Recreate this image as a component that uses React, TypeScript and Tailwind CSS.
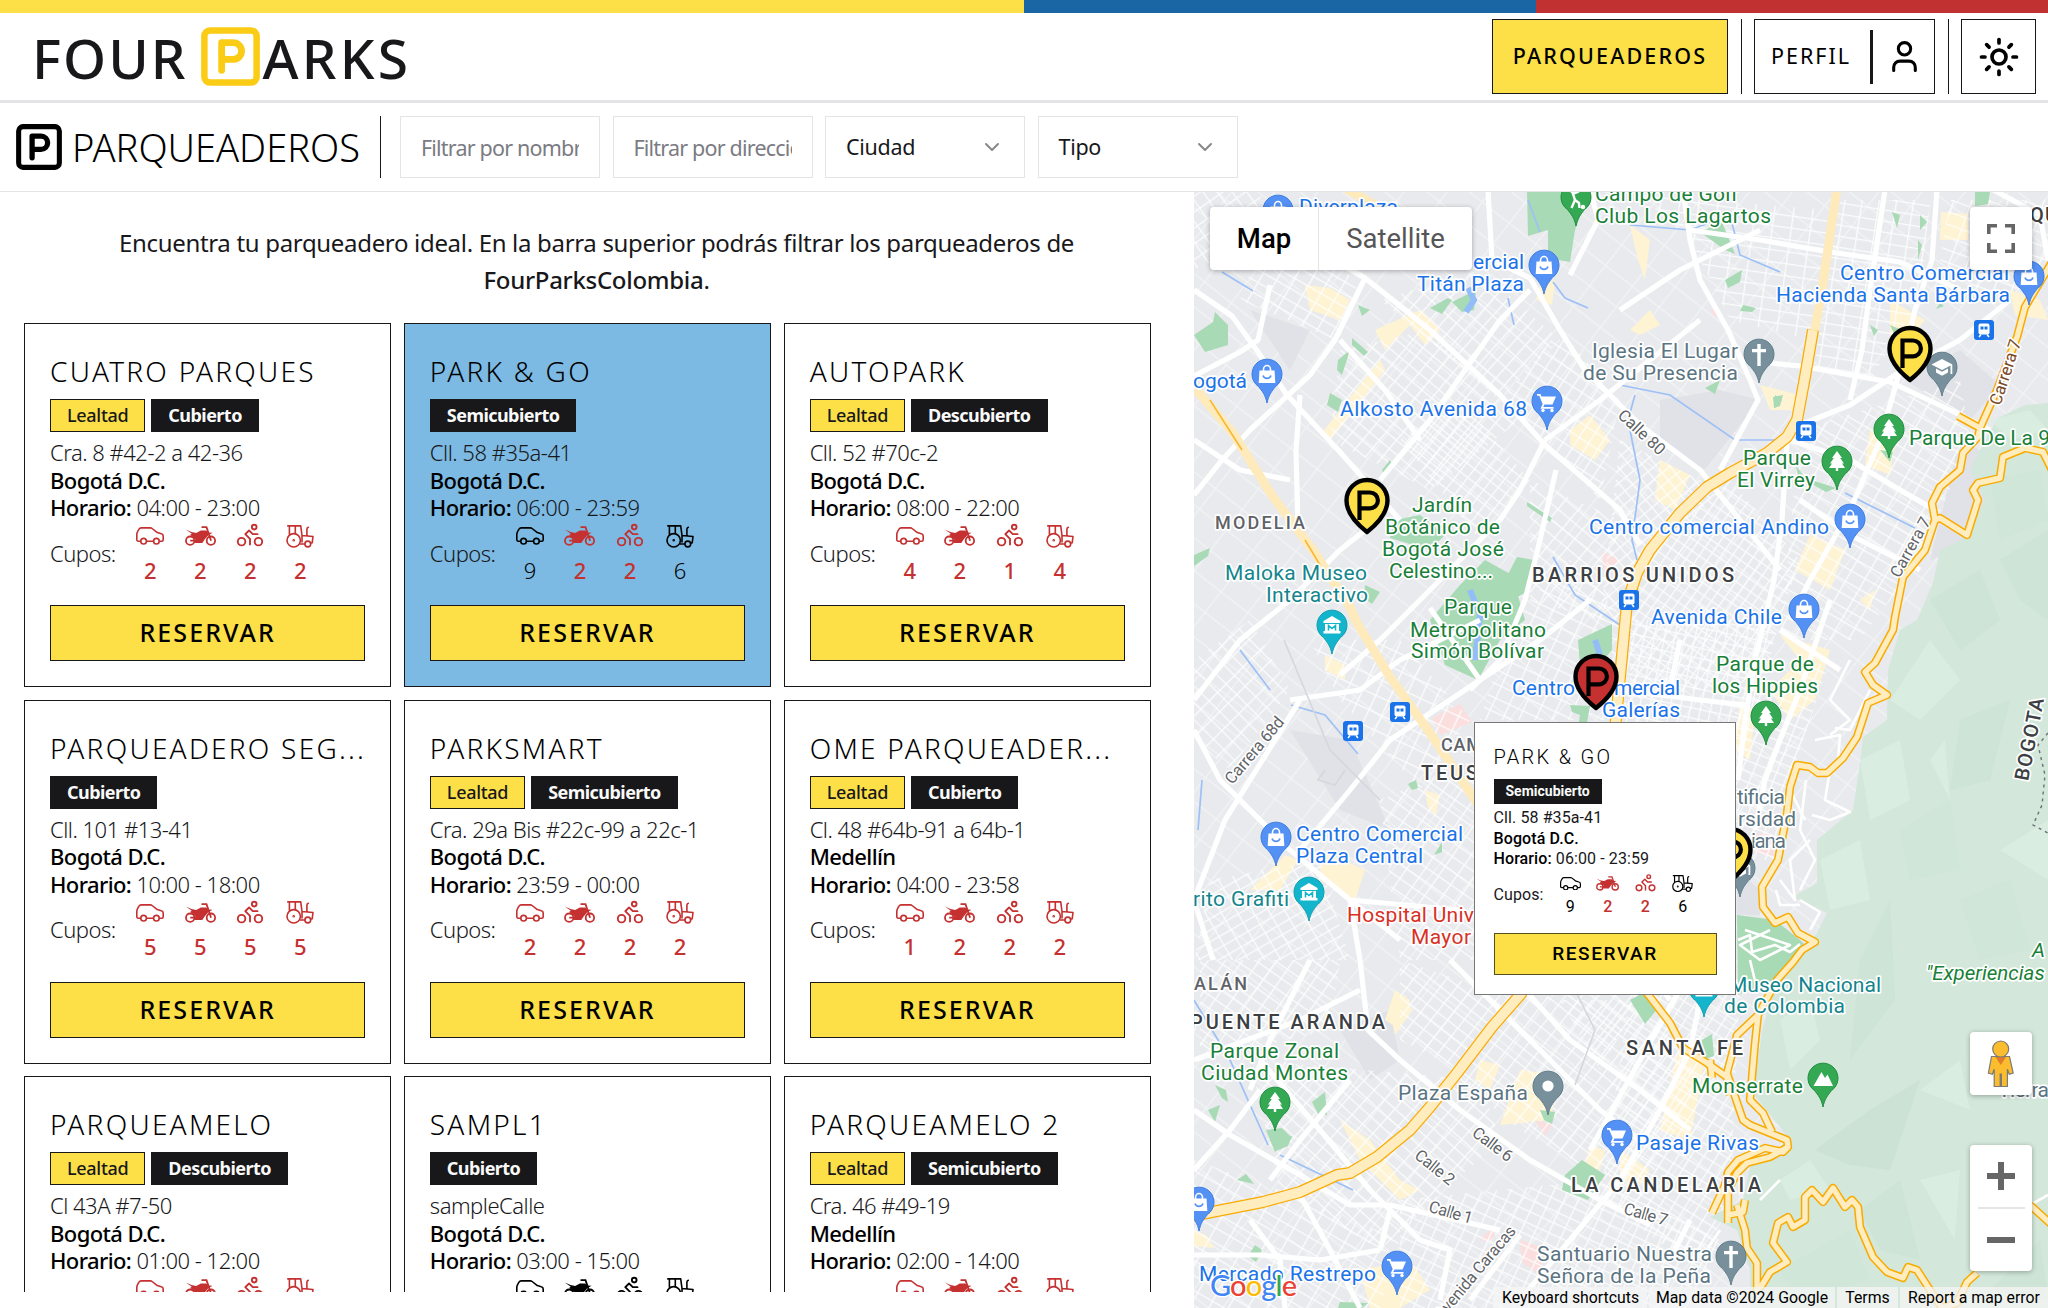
import React from 'react';
import { ChevronDown, Sun, User } from 'lucide-react';
import { PiPersonSimpleBike } from 'react-icons/pi';

type Lot = {
  name: string;
  loyalty: boolean;
  kind: string;
  address: string;
  city: string;
  hours: string;
  slots: [number, number, number, number];
  low: [boolean, boolean, boolean, boolean];
  active?: boolean;
};

const ALL: Lot['low'] = [true, true, true, true];
const NONE: Lot['low'] = [false, false, false, false];

const LOTS: Lot[] = [
  { name: 'CUATRO PARQUES', loyalty: true, kind: 'Cubierto', address: 'Cra. 8 #42-2 a 42-36', city: 'Bogotá D.C.', hours: '04:00 - 23:00', slots: [2, 2, 2, 2], low: ALL },
  { name: 'PARK & GO', loyalty: false, kind: 'Semicubierto', address: 'Cll. 58 #35a-41', city: 'Bogotá D.C.', hours: '06:00 - 23:59', slots: [9, 2, 2, 6], low: [false, true, true, false], active: true },
  { name: 'AUTOPARK', loyalty: true, kind: 'Descubierto', address: 'Cll. 52 #70c-2', city: 'Bogotá D.C.', hours: '08:00 - 22:00', slots: [4, 2, 1, 4], low: ALL },
  { name: 'PARQUEADERO SEG...', loyalty: false, kind: 'Cubierto', address: 'Cll. 101 #13-41', city: 'Bogotá D.C.', hours: '10:00 - 18:00', slots: [5, 5, 5, 5], low: ALL },
  { name: 'PARKSMART', loyalty: true, kind: 'Semicubierto', address: 'Cra. 29a Bis #22c-99 a 22c-1', city: 'Bogotá D.C.', hours: '23:59 - 00:00', slots: [2, 2, 2, 2], low: ALL },
  { name: 'OME PARQUEADER...', loyalty: true, kind: 'Cubierto', address: 'Cl. 48 #64b-91 a 64b-1', city: 'Medellín', hours: '04:00 - 23:58', slots: [1, 2, 2, 2], low: ALL },
  { name: 'PARQUEAMELO', loyalty: true, kind: 'Descubierto', address: 'Cl 43A #7-50', city: 'Bogotá D.C.', hours: '01:00 - 12:00', slots: [0, 2, 2, 2], low: ALL },
  { name: 'SAMPL1', loyalty: false, kind: 'Cubierto', address: 'sampleCalle', city: 'Bogotá D.C.', hours: '03:00 - 15:00', slots: [9, 9, 9, 9], low: NONE },
  { name: 'PARQUEAMELO 2', loyalty: true, kind: 'Semicubierto', address: 'Cra. 46 #49-19', city: 'Medellín', hours: '02:00 - 14:00', slots: [0, 2, 2, 2], low: ALL },
];

function ParkingIcon({ className }: { className: string }) {
  return (
    <svg viewBox="0 0 20 20" fill="none" stroke="currentColor" strokeLinecap="round" strokeLinejoin="round" className={className}>
      <rect x="1.15" y="1.15" width="17.7" height="17.7" rx="1.9" strokeWidth="2.2" />
      <path d="M7 14.7V5.3h3.9a2.85 2.85 0 0 1 0 5.7H7" strokeWidth="2.3" />
    </svg>
  );
}

function CarIcon({ className }: { className: string }) {
  return (
    <svg viewBox="0 0 28 18" fill="none" stroke="currentColor" strokeWidth="1.6" strokeLinejoin="round" className={className}>
      <path d="M4.700 14.200H2.200a1.400 1.400 0 0 1-1.400-1.400V7.600c0-1.200.3-2.300.9-3.300L3 2.100C3.500 1.300 4.200.9 5.100.9h9.200c.7 0 1.300.2 1.800.6l5.200 4.100 4 1.100c1.200.3 1.900 1.200 1.900 2.400v3.700c0 .8-.6 1.400-1.400 1.400h-2.500M10.500 14.200h7" />
      <circle cx="7.600" cy="14.200" r="2.800" />
      <circle cx="20.400" cy="14.200" r="2.800" />
    </svg>
  );
}

function MotoIcon({ className }: { className: string }) {
  return (
    <svg viewBox="0 0 31 20" fill="none" stroke="currentColor" strokeWidth="1.800" className={className}>
      <circle cx="5.200" cy="14.700" r="4.200" />
      <circle cx="25.900" cy="14.700" r="4.200" />
      <path d="M16.500 1.200h5l4.600 13.500M5.200 14.700h8" />
      <path d="M.8 3.600 6.500 6l4.700.9 4.600-2.400h5.400l2 2 4.300.3-4.200 2.500-3.500 4-2.500 3.600h-7l-1.500-2 1.700-1.500L7.500 10.500 5 9l1.800-1.200Z" fill="currentColor" stroke="none" />
    </svg>
  );
}

function TractorIcon({ className }: { className: string }) {
  return (
    <svg viewBox="0 0 28 23" fill="none" stroke="currentColor" strokeWidth="1.600" strokeLinecap="round" strokeLinejoin="round" className={className}>
      <circle cx="7.700" cy="15.300" r="6.700" />
      <circle cx="7.700" cy="15.300" r=".5" />
      <circle cx="21.800" cy="19" r="2.900" />
      <path d="M1.800.9H14.700L16 10.500 27 11.500l-.8 6.300-1.600.3M3.400 1v8.200M9.300 1v7.400M16 10.500v6.500M14 19h4.800M20.900 10.800V4.200c0-1 .3-1.600 1.400-2" />
    </svg>
  );
}

function Slots({ lot, small }: { lot: Lot; small?: boolean }) {
  const icons = small
    ? [<CarIcon className="w-[21px]" />, <MotoIcon className="w-[23px]" />, <PiPersonSimpleBike className="size-[23px]" />, <TractorIcon className="w-[21px]" />]
    : [<CarIcon className="w-[28px]" />, <MotoIcon className="w-[31px]" />, <PiPersonSimpleBike className="size-[30px]" />, <TractorIcon className="w-[28px]" />];
  return (
    <div className="flex">
      {icons.map((icon, i) => (
        <div key={i} className={`flex flex-col items-center ${small ? 'w-[37.5px]' : 'w-[50px]'} ${lot.low[i] ? 'font-medium text-[#c53030]' : 'text-black'}`}>
          <span className={`flex items-center justify-center ${small ? 'h-[27px]' : 'h-[29px]'}`}>{icon}</span>
          <span className={small ? '' : 'mt-[6px]'}>{lot.slots[i]}</span>
        </div>
      ))}
    </div>
  );
}

function LotCard({ lot }: { lot: Lot }) {
  return (
    <article className={`flex h-[364px] flex-col border border-[#18181b] p-[25px] ${lot.active ? 'bg-[#7cbae3]' : 'bg-white'}`}>
      <h2 className="text-[28px] leading-[44px] font-[350] tracking-[2.250px] whitespace-nowrap text-black">{lot.name}</h2>
      <div className="mt-1.5 flex gap-1.5 text-[18px] leading-[31px]">
        {lot.loyalty && <span className="border border-[#18181b] bg-[#fde047] px-4 font-medium tracking-[-0.3px] text-[#18181b]">Lealtad</span>}
        <span className="border border-[#18181b] bg-[#18181b] px-4 font-bold tracking-[-0.550px] text-neutral-50">{lot.kind}</span>
      </div>
      <div className="mt-[7px] text-[22px] leading-[27.500px] font-[350] tracking-[-0.500px] text-[#18181b]">
        <p>{lot.address}</p>
        <p className="font-medium tracking-[-0.6px] text-black">{lot.city}</p>
        <p><span className="font-medium tracking-[-0.6px] text-black">Horario:</span> {lot.hours}</p>
        <div className="flex">
          <span className="w-[75px] pt-[18px]">Cupos:</span>
          <Slots lot={lot} />
        </div>
      </div>
      <button className="mt-auto h-14 border border-[#18181b] bg-[#fde047] text-[25px] font-medium tracking-[2.100px] text-black">RESERVAR</button>
    </article>
  );
}

function PopupCard({ lot }: { lot: Lot }) {
  return (
    <div className="absolute top-[530px] left-[280px] flex h-[273px] w-[262px] flex-col border border-[#777] bg-white px-[18.500px] pt-[19px] pb-[19px] font-['Roboto',sans-serif]">
      <h3 className="text-[20px] leading-[31px] font-[350] tracking-[2.300px] text-black">{lot.name}</h3>
      <span className="mt-1.5 self-start bg-[#18181b] px-3 text-[14px] leading-[25px] font-bold text-neutral-50">{lot.kind}</span>
      <div className="mt-[4px] text-[16px] leading-[20.600px] font-[370] tracking-[0.1px] text-[#18181b]">
        <p>{lot.address}</p>
        <p className="font-medium text-black">{lot.city}</p>
        <p><span className="font-medium text-black">Horario:</span> {lot.hours}</p>
        <div className="flex">
          <span className="w-[58px] pt-[15px]">Cupos:</span>
          <Slots lot={lot} small />
        </div>
      </div>
      <button className="mt-auto h-[42px] border border-[#55501f] bg-[#fde047] text-[19px] font-medium tracking-[1.600px] text-black">RESERVAR</button>
    </div>
  );
}

const BLUE = '#1a73e8';
const GREEN = '#188038';
const TEAL = '#12858d';
const SLATE = '#5b7583';
const RED = '#d93025';
const DARK = '#3c4043';

/* text, x start, x end, baseline, colour */
const PLACES: [string, number, number, number, string][] = [
  ['Diverplaza', 1299, 1398, 214, BLUE], ['ercial', 1473, 1524, 269, BLUE], ['Titán Plaza', 1417, 1524, 291, BLUE],
  ['Campo de Golf', 1595, 1738, 201, GREEN], ['Club Los Lagartos', 1595, 1771, 223, GREEN], ['ogotá', 1193, 1247, 388, BLUE],
  ['Alkosto Avenida 68', 1340, 1527, 416, BLUE], ['Iglesia El Lugar', 1592, 1738, 358, SLATE], ['de Su Presencia', 1583, 1738, 380, SLATE],
  ['Centro Comercial', 1840, 2009, 280, BLUE], ['Hacienda Santa Bárbara', 1776, 2010, 302, BLUE],
  ['Parque De La 9', 1909, 2050, 445, GREEN], ['Parque', 1743, 1811, 465, GREEN], ['El Virrey', 1737, 1815, 487, GREEN],
  ['Centro comercial Andino', 1589, 1829, 534, BLUE], ['Jardín', 1412, 1472, 512, GREEN], ['Botánico de', 1385, 1500, 534, GREEN],
  ['Bogotá José', 1382, 1504, 556, GREEN], ['Celestino...', 1389, 1493, 578, GREEN], ['Maloka Museo', 1225, 1367, 580, TEAL],
  ['Interactivo', 1266, 1368, 602, TEAL], ['Parque', 1444, 1512, 614, GREEN], ['Metropolitano', 1410, 1546, 637, GREEN],
  ['Simón Bolívar', 1411, 1544, 658, GREEN], ['Avenida Chile', 1651, 1782, 624, BLUE], ['Centro', 1512, 1575, 695, BLUE],
  ['mercial', 1614, 1680, 695, BLUE], ['Galerías', 1602, 1680, 717, BLUE], ['Parque de', 1716, 1814, 671, GREEN],
  ['los Hippies', 1712, 1818, 693, GREEN], ['Centro Comercial', 1296, 1463, 841, BLUE], ['Plaza Central', 1296, 1423, 863, BLUE],
  ['rito Grafiti', 1193, 1289, 906, TEAL], ['Hospital Univ', 1347, 1474, 922, RED], ['Mayor', 1411, 1471, 944, RED],
  ['tificia', 1737, 1785, 804, SLATE], ['rsidad', 1738, 1796, 826, SLATE], ['iana', 1751, 1786, 848, SLATE],
  ['Parque Zonal', 1210, 1339, 1058, GREEN], ['Ciudad Montes', 1201, 1348, 1080, GREEN], ['Plaza España', 1398, 1528, 1100, SLATE],
  ['Museo Nacional', 1729, 1881, 992, TEAL], ['de Colombia', 1724, 1845, 1013, TEAL], ['Monserrate', 1692, 1803, 1093, GREEN],
  ['Pasaje Rivas', 1636, 1759, 1150, BLUE], ['Santuario Nuestra', 1537, 1712, 1261, SLATE], ['Señora de la Peña', 1537, 1711, 1283, SLATE],
  ['Mercado Restrepo', 1199, 1376, 1281, BLUE], ['Tierra', 1998, 2049, 1097, SLATE],
];

/* text, x start, x end, baseline, size */
const DISTRICTS: [string, number, number, number, number][] = [
  ['MODELIA', 1215, 1305, 529, 18], ['BARRIOS UNIDOS', 1532, 1734, 582, 20], ['CAM', 1441, 1482, 751, 18], ['TEUSA', 1421, 1494, 780, 20],
  ['ALÁN', 1194, 1247, 990, 18], ['PUENTE ARANDA', 1190, 1385, 1029, 20], ['SANTA FE', 1626, 1743, 1055, 20], ['LA CANDELARIA', 1571, 1761, 1192, 20], ['QU', 2030, 2058, 222, 20],
];

/* text, centre x, centre y, angle, length, size, colour */
const STREETS: [string, number, number, number, number, number, string][] = [
  ['Calle 80', 1642, 432, 43, 58, 16.5, '#5f6368'], ['Carrera 7', 2005, 372, -72, 68, 17, '#7a4a26'], ['Carrera 7', 1910, 547, -61, 66, 16.5, '#5f6368'],
  ['Carrera 68d', 1254, 750, -50, 82, 16.5, '#5f6368'], ['Calle 6', 1493, 1144, 37, 46, 16.5, '#5f6368'], ['Calle 2', 1435, 1167, 39, 46, 16.5, '#5f6368'],
  ['Calle 1', 1451, 1212, 16, 45, 16.5, '#5f6368'], ['Calle 7', 1646, 1214, 16, 45, 16.5, '#5f6368'], ['Avenida Caracas', 1475, 1272, -50, 116, 16.5, '#5f6368'],
  ['BOGOTA', 2029, 739, -79, 84, 20, DARK],
];

type PinKind = 'bag' | 'cart' | 'tree' | 'museum' | 'church' | 'school' | 'dot' | 'peak' | 'golf';
const PINS: [PinKind, number, number][] = [
  ['bag', 1278, 210], ['bag', 1544, 265], ['bag', 1267, 374], ['cart', 1547, 401], ['bag', 2029, 276], ['bag', 1850, 519], ['bag', 1804, 609],
  ['bag', 1276, 837], ['museum', 1332, 625], ['museum', 1309, 892], ['museum', 1704, 988], ['tree', 1837, 461], ['tree', 1889, 429], ['golf', 1576, 197],
  ['tree', 1766, 716], ['tree', 1275, 1102], ['peak', 1823, 1078], ['dot', 1548, 1086], ['church', 1759, 354], ['school', 1942, 367],
  ['church', 1731, 1256], ['school', 1740, 868], ['cart', 1617, 1135], ['cart', 1397, 1266], ['bag', 1199, 1202],
];
const PIN_FILL: Record<PinKind, [string, string]> = {
  bag: ['#5491f5', '#3f7de0'], cart: ['#5491f5', '#3f7de0'], tree: ['#34a853', '#1e8e3e'], golf: ['#34a853', '#1e8e3e'], peak: ['#34a853', '#1e8e3e'],
  museum: ['#12b5cb', '#129eaf'], church: ['#78909c', '#607d8b'], school: ['#78909c', '#607d8b'], dot: ['#78909c', '#607d8b'],
};

function PinGlyph({ kind }: { kind: PinKind }) {
  switch (kind) {
    case 'bag':
      return (<g><path d="M-7.500-3.500h15L8.300 9H-8.300Z" fill="#fff" /><path d="M-3.500-3v-1.500a3.500 4 0 0 1 7 0V-3" fill="none" stroke="#fff" strokeWidth="1.600" /><path d="M-4 1.500a4.200 4.200 0 0 0 8 0" fill="none" stroke="#5491f5" strokeWidth="1.600" /></g>);
    case 'cart':
      return (<g fill="#fff"><path d="M-10-7h3.500l1 2.500H9L5.500 3.500h-8L-3.800 6H6.500v1.800H-6.500L-4.300 3-7.800-5.200H-10Z" /><circle cx="-4" cy="9.500" r="1.700" /><circle cx="5" cy="9.500" r="1.700" /></g>);
    case 'tree':
      return <path d="M0-10 5-3H3.200L7 2.500H5L8 7H1.200v3h-2.400V7H-8l3-4.500h-2L-3.200-3H-5Z" fill="#fff" />;
    case 'museum':
      return (<g><path d="M0-9 8.500-4v2h-17v-2ZM-7-1h14v7h1.500v2.500h-17V6H-7Z" fill="#fff" /><path d="M-3.500 5.500v-5L0 3.500 3.500.500v5" fill="none" stroke="#12b5cb" strokeWidth="1.600" /></g>);
    case 'church':
      return <path d="M-1.700-10h3.400v5H7v3.200H1.700V12h-3.400V-1.800H-7V-5h5.300Z" fill="#fff" />;
    case 'school':
      return (<g fill="#fff"><path d="M0-8 10.500-2.500 0 3-10.500-2.500Z" /><path d="M-6 1.500 0 4.700 6 1.500v4L0 8.800-6 5.500ZM8.500-2h1.800v9H8.500Z" /></g>);
    case 'dot':
      return <circle r="5.600" fill="#fff" />;
    case 'peak':
      return <path d="M-9.500 8-3-3.500-1.500-6l3.500 6 2.500-3.500L10 8Z" fill="#fff" />;
    case 'golf':
      return (<g fill="none" stroke="#fff" strokeWidth="2.400"><path d="M3-5.500-3-3l2 6-3.500 8M-1 3l4 3 .5 5" /><circle cx="-3.500" cy="-6" r="1.200" fill="#fff" /><circle cx="7" cy="10" r="1" /></g>);
  }
}

function ParkingPin({ x, y, fill }: { x: number; y: number; fill: string }) {
  return (
    <g transform={`translate(${x} ${y})`} stroke="#000" strokeWidth="4.400" strokeLinejoin="round">
      <path d="M0 31C-7 25.500-20.500 13.500-20.500-.5a20.500 20.500 0 0 1 41 0C20.500 13.500 7 25.500 0 31Z" fill={fill} />
      <path d="M-7.500 19V-8.500H3a7.900 7.900 0 0 1 0 15.800H-7.500" fill="none" strokeWidth="4.200" strokeLinejoin="miter" />
    </g>
  );
}

const HIGHWAYS = [
  'M1813 330 1805 377 1797 420 1787 437 1767 453 1730 473 1707 487 1680 513 1650 550 1637 573 1627 603 1620 677 1614 740 1600 860 1560 940 1520 995 1492 1027 1457 1073 1430 1107 1410 1130 1377 1157 1350 1173 1337 1175 1300 1192 1263 1202 1207 1213 1190 1216',
];
const AVENUES = [
  'M2052 262 2025 307 2017 337 1997 390 1980 428 1978 437 1963 453 1960 470 1940 487 1932 503 1935 520 1925 550 1903 577 1895 617 1893 630 1875 663 1865 672 1873 685 1887 695 1868 703 1857 737 1843 758 1827 773 1818 773 1810 767 1797 765 1790 787 1787 813 1778 860 1762 887 1763 907 1775 923 1788 917 1798 933 1815 942 1802 950 1793 962 1777 980 1758 1015 1737 1035 1727 1073 1743 1120 1750 1125 1787 1140 1788 1147 1770 1157 1747 1163 1737 1173 1728 1190 1728 1223',
  'M1958 416 1980 428', 'M1935 520 1940 518 1967 535 1978 500 1973 490 1978 483 2000 478 2003 457 2025 448 2043 452 2052 470',
  'M1758 1015 1755 1043 1750 1100 1763 1113 1772 1132', 'M1640 985 1650 997 1670 1023 1683 1048 1707 1063 1727 1077 1730 1095',
  'M1788 1147 1783 1152 1765 1148 1738 1160 1728 1172 1725 1185 1712 1213', 'M1745 1200 1743 1212 1728 1215',
  'M1737 1205 1745 1230 1747 1248 1757 1263 1757 1290 1762 1285 1770 1272 1787 1262 1773 1243 1778 1223 1788 1217 1793 1227 1805 1220 1805 1197 1812 1190 1823 1202 1833 1188 1845 1207 1852 1200 1858 1207 1860 1227 1873 1257 1887 1272 1903 1278 1908 1267 1917 1270 1930 1290 1942 1308 1957 1303 1967 1282 1977 1273',
  'M2030 1205 2052 1225', 'M1710 1060 1712 1078',
];
const PALE = ['M1837 188 1823 283 1813 340', 'M1192 385 1233 433 1273 497 1313 550 1350 607 1357 623 1390 677 1430 733 1473 797 1520 870', 'M1345 188 1380 208'];

const MAJOR = [
  'M1194 290 1232 316 1258 352 1287 395 1340 452 1400 520', 'M1365 278 1335 340 1310 375 1250 430 1222 460 1194 495', 'M1280 230 1365 278 1430 330 1500 395 1545 445 1620 510 1640 545',
  'M1194 376 1240 352 1258 340 1270 285', 'M1530 290 1500 320 1465 370 1430 420 1380 480', 'M1488 190 1492 260 1530 278 1560 330 1585 370 1610 395 1640 425 1700 470 1740 520 1780 570',
  'M1545 440 1520 490 1500 520 1440 580 1380 640 1340 675', 'M1300 395 1296 450 1298 530', 'M1340 340 1385 390 1420 440', 'M1545 440 1600 400 1650 360 1700 320',
  'M1194 700 1240 640 1290 600 1340 550 1378 520', 'M1194 730 1220 780 1290 850 1350 900 1400 940', 'M1480 680 1390 740 1350 790 1300 850', 'M1290 700 1360 690 1400 660 1480 620',
  'M1430 608 1480 680 1540 640 1590 600', 'M1556 470 1540 540 1525 600 1500 660 1470 690', 'M1683 190 1690 240 1700 280 1728 330 1750 380 1758 400 1720 470', 'M1620 310 1680 270 1760 230',
  'M1690 230 1760 240 1830 252 1900 262 1960 290', 'M1885 190 1870 290 1862 350 1850 400', 'M1937 190 1932 260 1915 310 1900 370 1880 440 1850 510 1810 580 1790 620', 'M1740 360 1800 366 1890 382 1950 410 1990 430',
  'M1800 425 1850 405 1900 372 1960 340 2010 300', 'M1787 440 1782 520 1774 580 1755 660 1745 720 1738 780', 'M1800 500 1850 535 1920 570', 'M1790 440 1850 460 1900 490 1935 510',
  'M1830 600 1800 690 1780 740 1765 780 1755 830', 'M1780 630 1840 670', 'M1620 690 1700 700 1745 705', 'M1680 640 1670 690', 'M1450 960 1500 1010 1550 1060 1600 1110 1640 1140', 'M1525 990 1570 1040 1640 1090 1690 1130',
  'M1360 960 1368 1030 1400 1060 1460 1110 1530 1160 1600 1200 1650 1225', 'M1360 990 1300 1020 1194 1060', 'M1194 1110 1230 1135 1300 1175 1350 1205 1390 1205 1500 1230', 'M1350 1080 1300 1140 1270 1180',
  'M1260 1090 1230 1130 1194 1170', 'M1260 1060 1320 1130 1370 1190 1390 1210 1380 1250', 'M1700 1000 1690 1050 1660 1110 1620 1180 1570 1240 1520 1300', 'M1640 960 1670 1000', 'M1520 1235 1470 1300', 'M1390 1210 1420 1240 1450 1250 1440 1300',
  'M1194 1255 1260 1255 1320 1260 1380 1250', 'M1300 1195 1330 1250 1360 1308', 'M1690 1220 1670 1260', 'M1250 1220 1280 1260 1285 1308', 'M1590 1150 1640 1060 1680 990', 'M1310 960 1270 1040 1250 1090', 'M1350 900 1460 910', 'M1350 900 1360 960', 'M1213 960 1194 900 1225 820 1300 700', 'M1194 440 1240 470 1290 480', 'M1590 188 1598 220 1570 275', 'M1990 188 2040 215 2048 260',
];

const MINOR = [
  'M1806 780 1800 830 1815 860 1800 890', 'M1830 770 1825 800 1850 812 1830 820 1812 815', 'M1810 840 1790 860 1795 900 1780 880', 'M1850 660 1830 700 1850 720 1830 735', 'M1870 690 1850 730 1835 728',
  'M1745 930 1790 945 1760 960 1740 945 1770 930', 'M1800 900 1820 912 1810 930', 'M1750 960 1756 985', 'M1790 790 1805 820', 'M1780 1180 1760 1200', 'M1720 1230 1700 1260', 'M2030 1205 2048 1195',
  'M1738 940 1750 935 1752 952 1775 945 1790 952 1800 944', 'M1815 740 1840 735 1838 760', 'M1800 905 1780 905 1776 890',
];

const PARKS = [
  'M1527 190 1590 190 1575 230 1570 262 1548 258 1548 230 1528 236Z', 'M1700 232 1722 222 1735 254 1725 250Z', 'M1194 335 1213 322 1215 312 1228 325 1228 345 1205 352Z', 'M1358 305 1370 310 1362 316Z',
  'M1352 338 1368 352 1364 356 1352 345Z', 'M1338 360 1350 350 1342 375 1337 370Z', 'M1330 393 1342 400 1338 412 1327 405Z', 'M1430 308 1448 298 1452 300 1442 314Z', 'M1452 302 1476 290 1474 310 1462 312Z',
  'M1395 520 1420 515 1445 535 1430 550 1390 538Z', 'M1430 620 1460 585 1485 560 1512 575 1525 620 1500 640 1478 680 1445 665Z', 'M1517 557 1534 560 1530 590 1512 600 1505 580Z', 'M1365 585 1380 592 1372 604 1364 598Z',
  'M1578 640 1612 624 1612 650 1590 675 1580 665Z', 'M1570 705 1590 706 1586 728 1578 728 1580 715 1572 712Z', 'M1725 280 1742 270 1740 282 1728 288Z', 'M1705 388 1720 380 1715 394Z', 'M1775 395 1782 400 1775 408Z', 'M1737 915 1775 920 1800 940 1810 950 1785 975 1738 995Z',
  'M1630 1000 1648 990 1658 1008 1645 1024Z', 'M1266 1130 1282 1128 1292 1138 1275 1152Z', 'M1312 1102 1325 1092 1327 1115 1318 1114Z', 'M1208 1110 1220 1105 1215 1122Z', 'M1215 1085 1226 1090 1228 1102 1222 1098Z', 'M1565 1175 1582 1160 1605 1175 1588 1200 1562 1190Z',
  'M1237 1180 1246 1174 1254 1184Z', 'M1255 1245 1262 1250 1256 1262 1248 1256Z', 'M1340 1302 1368 1303 1362 1308 1338 1308Z', 'M1702 1040 1712 1034 1714 1056 1702 1060Z', 'M1540 1110 1555 1112 1552 1124 1544 1120Z', 'M1434 855 1442 842 1442 852Z', 'M1408 784 1416 780 1418 788 1412 790Z',
  'M1880 450 1893 452 1890 462Z', 'M1796 466 1806 478 1836 488 1826 492 1798 476Z', 'M1892 212 1900 215 1897 228Z', 'M1920 215 1927 222 1920 230Z', 'M1918 240 1922 245 1918 260Z', 'M1870 325 1878 330 1874 336Z', 'M1890 325 1902 330 1896 338Z', 'M1975 190 1990 192 1988 204 1975 206Z', 'M1940 303 1944 306 1936 309Z', 'M1382 470 1390 460 1392 464 1384 476Z',
  'M1527 502 1552 518 1550 522 1527 506Z', 'M1194 555 1210 548 1208 556 1194 566Z', 'M1773 397 1783 395 1780 406 1774 408Z', 'M1743 305 1756 308 1752 312 1740 311Z', 'M1270 1140 1292 1136 1288 1146 1276 1151Z',
];

const SHOPS = [
  'M1305 285 1330 288 1350 300 1340 320 1310 310Z', 'M1375 330 1420 310 1440 330 1425 345 1410 325 1385 350Z', 'M1320 435 1380 360 1385 370 1330 440Z', 'M1540 285 1555 280 1552 305 1536 300Z',
  'M1570 430 1590 415 1610 440 1595 460 1570 445Z', 'M1941 212 1968 214 1968 240 1940 240Z', 'M1630 225 1650 240 1645 280 1638 260Z', 'M1630 330 1650 310 1660 325 1640 335Z', 'M1810 535 1845 550 1830 590 1795 570Z', 'M1870 430 1895 440 1890 475 1865 465Z',
  'M1660 460 1690 475 1675 510 1655 500Z', 'M1760 385 1800 395 1795 410 1770 410Z', 'M1780 635 1830 650 1815 700 1790 720 1770 690 1800 660Z', 'M1740 700 1755 710 1750 760 1735 750Z', 'M1250 890 1285 855 1298 860 1280 890Z', 'M1320 850 1365 870 1355 900 1320 880Z',
  'M1395 990 1410 1000 1400 1030 1385 1020Z', 'M1390 1010 1405 995 1412 1010 1395 1035Z', 'M1340 1120 1370 1140 1400 1180 1420 1190 1400 1200 1360 1160Z', 'M1480 1060 1500 1065 1490 1090 1475 1080Z', 'M1520 1070 1560 1075 1550 1120 1500 1125Z', 'M1680 1040 1705 1060 1690 1140 1660 1130Z',
  'M1590 1145 1605 1150 1600 1170 1585 1165Z', 'M1360 1270 1410 1260 1430 1290 1400 1308 1370 1308Z', 'M1194 1230 1206 1235 1214 1248 1194 1246Z', 'M1620 1150 1650 1170 1640 1185 1620 1180Z', 'M2010 290 2040 300 2048 320 2015 315Z', 'M1325 655 1345 665 1345 680 1325 670Z', 'M1425 790 1440 795 1436 815 1428 808Z', 'M1890 300 1925 320 1900 350 1890 340Z', 'M1860 600 1875 590 1870 610Z',
];

/* street grids: outline, angle, cell width, cell height */
const GRIDS: [string, number, number, number][] = [
  ['M1265 235 1360 280 1335 340 1240 300Z', 30, 15, 11], ['M1380 300 1480 270 1560 340 1500 400Z', 42, 11, 15], ['M1340 350 1430 330 1520 420 1430 490 1330 440Z', 40, 13, 11], ['M1500 400 1560 330 1620 400 1600 500 1545 440Z', 33, 11, 13],
  ['M1400 440 1460 400 1530 480 1480 540Z', 38, 10, 11], ['M1194 660 1250 620 1290 690 1230 770 1194 740Z', 45, 15, 12], ['M1620 440 1720 490 1640 570 1630 620 1600 620Z', 50, 10, 10], ['M1630 570 1730 480 1800 560 1760 680 1630 700Z', 35, 9, 10],
  ['M1640 195 1830 210 1810 340 1730 320 1690 240Z', 8, 19, 12], ['M1830 200 1930 200 1920 300 1870 380 1815 370Z', 9, 17, 11], ['M1800 430 1960 380 1970 440 1920 560 1860 640 1780 640Z', 30, 16, 12], ['M1625 620 1780 620 1740 780 1620 780Z', 12, 10, 10],
  ['M1735 700 1830 660 1790 780 1780 860 1735 860Z', 22, 11, 10], ['M1500 1000 1640 990 1700 1080 1640 1200 1520 1130 1460 1080Z', 38, 13, 14], ['M1630 990 1740 980 1730 1200 1700 1270 1600 1200Z', 32, 11, 11], ['M1200 960 1340 960 1330 1030 1200 1060Z', 35, 14, 11],
  ['M1250 1060 1480 1080 1500 1140 1380 1250 1280 1190Z', 42, 14, 11], ['M1194 1160 1280 1190 1400 1240 1380 1308 1194 1308Z', 30, 17, 13], ['M1400 1200 1600 1180 1720 1240 1700 1308 1400 1308Z', 25, 13, 11], ['M1210 880 1320 860 1350 960 1194 960Z', 60, 10, 14],
  ['M1380 800 1474 760 1474 960 1400 960Z', 35, 15, 12], ['M1310 640 1400 640 1470 720 1420 790 1340 700Z', 25, 14, 16], ['M1400 960 1520 1000 1460 1070 1400 1040Z', 38, 13, 11], ['M1560 1000 1640 1000 1600 1070Z', 38, 11, 11], ['M1510 620 1570 560 1625 620 1610 720 1480 720Z', 25, 15, 13], ['M1194 192 1260 192 1265 235 1194 270Z', 55, 13, 12], ['M1530 480 1620 520 1600 620 1530 600Z', 40, 16, 12], ['M1950 200 2048 200 2048 280 1990 300 1940 260Z', 20, 17, 12],
];

const FACETS: [string, string][] = [
  ['M1990 420 2030 410 2048 430 2010 440Z', '#dcefe3'], ['M1930 600 1980 570 2000 620 1960 650Z', '#cbe2d5'], ['M2000 560 2048 530 2048 620 2020 600Z', '#cbe2d5'], ['M1930 640 1960 680 1920 720 1890 700Z', '#dcefe3'], ['M1960 720 2010 700 1990 780 1950 790Z', '#cbe2d5'],
  ['M1860 760 1900 740 1910 800 1870 820Z', '#dcefe3'], ['M1900 830 1950 800 1960 870 1910 880Z', '#cfe5d8'], ['M1820 860 1860 840 1870 900 1830 910Z', '#dcefe3'], ['M1890 900 1895 1000 1850 1060 1860 960Z', '#cbe2d5'], ['M1960 900 2010 880 2030 950 1980 960Z', '#cfe5d8'],
  ['M1780 1020 1810 1000 1820 1040 1790 1070Z', '#dcefe3'], ['M1815 1150 1870 1110 1920 1080 1890 1170 1850 1165Z', '#c8dfd2'], ['M1780 1180 1810 1160 1830 1190 1790 1200Z', '#dcefe3'], ['M1860 1210 1900 1180 1920 1260 1880 1250Z', '#cbe2d5'], ['M1920 1090 1960 1060 1970 1110Z', '#dcefe3'],
  ['M1780 1270 1850 1230 1870 1280 1800 1300Z', '#cfe5d8'], ['M1920 1180 1960 1170 1955 1240Z', '#dcefe3'], ['M1990 1290 2040 1240 2048 1300Z', '#cbe2d5'], ['M2000 850 2048 820 2048 880Z', '#dcefe3'], ['M1930 760 1945 740 1950 800Z', '#dcefe3'], ['M1990 480 2040 470 2048 520 2000 540Z', '#cfe5d8'],
];

const MOUNTAIN = 'M2048 403 2025 405 1998 418 1985 440 1970 470 1985 500 1967 537 1940 550 1933 583 1917 620 1900 630 1888 670 1887 720 1863 737 1860 763 1853 810 1817 840 1817 883 1793 897 1827 913 1817 933 1777 980 1763 1027 1753 1093 1790 1140 1750 1167 1743 1200 1710 1217 1737 1230 1750 1270 1750 1308 2048 1308Z';

function MapCanvas() {
  return (
    <svg viewBox="1194 192 854 1116" className="block h-full w-full font-['Roboto',sans-serif]">
      <defs>
        <pattern id="base" width="34" height="26" patternUnits="userSpaceOnUse" patternTransform="rotate(38)">
          <path d="M0 0H34M0 0V26" stroke="#fff" strokeWidth="2.400" />
        </pattern>
        {GRIDS.map(([, angle, w, h], i) => (
          <pattern key={i} id={`grid${i}`} width={w} height={h} patternUnits="userSpaceOnUse" patternTransform={`rotate(${angle})`}>
            <path d={`M0 0H${w}M0 0V${h}`} stroke="#fff" strokeWidth="2.600" />
          </pattern>
        ))}
      </defs>
      <rect x="1194" y="192" width="854" height="1116" fill="#e8eaed" />
      <path d="M1194 192H2048V1308H1194Z" fill="url(#base)" opacity="0.45" />
      <g fill="#e1e2e7">
        <path d="M1660 400 1720 390 1760 400 1705 470 1660 440Z M1905 380 1960 350 2000 385 1970 420Z M1290 730 1350 740 1390 830 1340 810Z M1340 1030 1390 1010 1400 1060 1370 1080Z M1960 440 2000 460 1990 540 1930 560Z M1737 870 1760 890 1760 915 1737 915Z M1250 310 1310 330 1290 370Z" />
      </g>
      <g fill="#fef3d3">{SHOPS.map((d) => <path key={d} d={d} />)}</g>
      <g fill="#fbdfdf"><path d="M1432 718 1460 704 1472 722 1440 735Z M1710 310 1720 308 1716 318Z M1480 1240 1492 1228 1495 1236 1488 1242Z M1520 1240 1545 1248 1540 1275 1522 1262Z M1535 1120 1552 1125 1545 1136Z M1755 833 1775 835 1773 856 1755 852Z M1602 552 1620 560 1604 572Z" /></g>
      {GRIDS.map(([d], i) => <path key={i} d={d} fill={`url(#grid${i})`} opacity="0.85" />)}
      <g fill="#a8dab5">{PARKS.map((d) => <path key={d} d={d} />)}</g>
      <path d={MOUNTAIN} fill="#d3e7da" />
      {FACETS.map(([d, fill]) => <path key={d} d={d} fill={fill} opacity="0.7" />)}
      <g fill="none" stroke="#9dc0f7" strokeWidth="1.700">
        <path d="M1222 272 1253 291M1508 298 1514 325M1553 282 1565 298 1588 308M1630 225 1690 230 1730 215 1740 255 1780 272M1620 385 1670 395 1735 440 1790 440M1635 395 1628 420 1640 480 1632 540 1637 560M1845 493 1915 528M1553 557 1575 595 1620 625M1240 650 1270 690M1291 705 1325 715 1358 754M1202 780 1198 830M1194 1000 1230 1060 1268 1145M1280 1155 1353 1190M1528 200 1540 232" />
        <path d="M1468 288 1474 300 1466 312M1470 590 1480 615 1475 660M1595 640 1600 655" stroke="#93bdf8" strokeWidth="6" />
      </g>
      <g fill="none" stroke="#fff" strokeWidth="5.200" strokeLinejoin="round">{MAJOR.map((d) => <path key={d} d={d} />)}</g>
      <g fill="none" stroke="#fff" strokeWidth="2.600" strokeLinejoin="round">{MINOR.map((d) => <path key={d} d={d} />)}</g>
      <path d="M1284 640 1330 750 1380 800M1325 770 1318 780 1335 785 1345 770M1560 960 1595 1030 1575 1085" fill="none" stroke="#d5d7dc" strokeWidth="1.600" />
      <path d="M2048 733 2038 745 2045 775 2042 805 2033 825 2048 833" fill="none" stroke="#6b7075" strokeWidth="1.400" strokeDasharray="3 4" />
      <g fill="none" strokeLinejoin="round">
        <g stroke="#feeabb" strokeWidth="9">{PALE.map((d) => <path key={d} d={d} />)}</g>
        <path d="M1210 400 1242 450M1305 540 1320 565M1810 330 1800 400" stroke="#fbb62c" strokeWidth="1.500" />
        <g stroke="#f9ab00" strokeWidth="12">{HIGHWAYS.map((d) => <path key={d} d={d} />)}</g>
        <g stroke="#f9ab00" strokeWidth="8.400">{AVENUES.map((d) => <path key={d} d={d} />)}</g>
        <g stroke="#ffecbf" strokeWidth="9.600">{HIGHWAYS.map((d) => <path key={d} d={d} />)}</g>
        <g stroke="#ffecbf" strokeWidth="5.400">{AVENUES.map((d) => <path key={d} d={d} />)}</g>
      </g>
      {[[1400, 712], [1353, 731], [1806, 431], [1984, 330], [1629, 600]].map(([x, y]) => (
        <g key={x} transform={`translate(${x} ${y})`}>
          <rect x="-10" y="-10" width="20" height="20" rx="3" fill="#1a73e8" />
          <rect x="-5.500" y="-6.500" width="11" height="11" rx="2" fill="#fff" />
          <path d="M-3.500-3.500h3v3h-3ZM.5-3.500h3v3h-3Z" fill="#1a73e8" />
          <path d="M-3 4.500-5 7M3 4.500 5 7" stroke="#fff" strokeWidth="1.500" />
        </g>
      ))}
      <g stroke="#fff" strokeWidth="3.400" strokeLinejoin="round" style={{ paintOrder: 'stroke' }}>
        {PLACES.map(([t, a, b, y, c]) => (
          <text key={t + a + y} x={a} y={y} textLength={b - a} fontSize="21" fill={c}>{t}</text>
        ))}
        <text x="1926" y="980" fontSize="20.500" fontStyle="italic" fill={GREEN}>&quot;Experiencias</text>
        <text x="2032" y="957" fontSize="20.500" fontStyle="italic" fill={GREEN}>A</text>
        {DISTRICTS.map(([t, a, b, y, s]) => (
          <text key={t} x={a} y={y} textLength={b - a} fontSize={s} fontWeight="500" fill={s === 18 ? '#5f6368' : DARK}>{t}</text>
        ))}
        {STREETS.map(([t, x, y, r, len, s, c]) => (
          <text key={t + x} transform={`translate(${x} ${y}) rotate(${r})`} x={-len / 2} y={s * 0.36} textLength={len} fontSize={s} fontWeight={s === 20 ? 500 : 400} fill={c}>{t}</text>
        ))}
      </g>
      {PINS.map(([kind, x, y]) => (
        <g key={`${x}-${y}`} transform={`translate(${x} ${y})`}>
          <path d="M0 29C-1.500 21-5 17-8.500 12.500A15 15 0 1 1 8.500 12.500C5 17 1.500 21 0 29Z" fill={PIN_FILL[kind][0]} stroke={PIN_FILL[kind][1]} strokeWidth="1" />
          <PinGlyph kind={kind} />
        </g>
      ))}
      <ParkingPin x={1367} y={501} fill="#fde047" />
      <ParkingPin x={1910} y={349} fill="#fde047" />
      <ParkingPin x={1730} y={850} fill="#fde047" />
      <ParkingPin x={1596} y={677} fill="#c53030" />
      <text x="1210" y="1296" textLength="87" fontSize="29" fontWeight="500" className="font-['Lato',sans-serif]" stroke="#fff" strokeWidth="2.500" style={{ paintOrder: 'stroke' }}>
        <tspan fill="#4285f4">G</tspan><tspan fill="#ea4335">o</tspan><tspan fill="#fbbc04">o</tspan><tspan fill="#4285f4">g</tspan><tspan fill="#34a853">l</tspan><tspan fill="#ea4335">e</tspan>
      </text>
    </svg>
  );
}

function MapPane() {
  const control = 'absolute left-[776px] w-[62px] rounded-sm bg-white shadow-[0_1px_5px_rgba(0,0,0,0.3)] flex items-center justify-center';
  return (
    <section className="relative h-[1116px] w-[854px] overflow-hidden">
      <MapCanvas />
      <div className="absolute top-[15px] left-4 flex h-[63px] rounded-sm bg-white font-['Roboto',sans-serif] text-[27.500px] leading-[63px] shadow-[0_1px_5px_rgba(0,0,0,0.3)]">
        <span className="w-[109px] border-r border-neutral-200 text-center font-medium text-black">Map</span>
        <span className="w-[153px] text-center text-[#565656]">Satellite</span>
      </div>
      <div className={`${control} top-[15px] h-[63px]`}>
        <svg viewBox="0 0 28 29" className="h-[29px] w-7" fill="none" stroke="#666" strokeWidth="3.600">
          <path d="M1.800 10V1.800H10M18 1.800h8.200V10M26.200 19v8.200H18M10 27.200H1.800V19" />
        </svg>
      </div>
      <div className={`${control} top-[840px] h-[63px]`}>
        <svg viewBox="0 0 28 48" className="h-12 w-7" stroke="#7a7a7a" strokeWidth="1.200">
          <path d="M4.500 16.500h18l3.700 16.500-4 1.200-1.800-5V46.500h-6V34h-1.200v12.500h-6V29.200l-1.800 5-4-1.200Z" fill="#fbbc2d" />
          <path d="M8.500 17h10.500l-5.200 8Z" fill="#e07c2a" stroke="none" />
          <circle cx="13.700" cy="9" r="8" fill="#fbbc2d" />
        </svg>
      </div>
      <div className={`${control} top-[953px] h-[126px] flex-col`}>
        <span className="flex h-[62px] items-center">
          <svg viewBox="0 0 28 28" className="size-7"><path d="M11 0h6v11h11v6H17v11h-6V17H0v-6h11Z" fill="#666" /></svg>
        </span>
        <span className="h-[2px] w-[47px] bg-[#e6e6e6]" />
        <span className="flex h-[62px] items-center">
          <svg viewBox="0 0 28 6" className="h-1.5 w-7"><path d="M0 0h28v6H0Z" fill="#666" /></svg>
        </span>
      </div>
      <PopupCard lot={LOTS[1]} />
      <div className="absolute right-0 bottom-0 flex h-[21px] gap-0.5 font-['Roboto',sans-serif] text-[15.800px] leading-[21px] whitespace-nowrap text-black">
        <span className="w-[154px] bg-neutral-100/75 pl-[9px]">Keyboard shortcuts</span>
        <span className="w-[186px] bg-neutral-100/75 text-center">Map data ©2024 Google</span>
        <span className="w-[61px] bg-neutral-100/75 text-center">Terms</span>
        <span className="w-[148px] bg-neutral-100/75 pl-[8px]">Report a map error</span>
      </div>
    </section>
  );
}

export default function App() {
  const field = 'h-[62px] w-[200px] border border-[#e4e4e4] px-5';
  return (
    <div className="h-[1308px] w-[2048px] overflow-hidden bg-white font-['Noto_Sans',sans-serif] text-[#18181b]">
      <div className="grid h-[13px] grid-cols-4">
        <span className="col-span-2 bg-[#fde047]" />
        <span className="bg-[#1a65a3]" />
        <span className="bg-[#c23131]" />
      </div>
      <header className="flex h-[90px] items-center justify-between border-b-[3px] border-[#e4e4e7] pr-3 pl-8">
        <div className="flex items-center text-[55px] leading-none font-medium text-[#18181b]">
          <span className="mr-[13px] pt-0.5 tracking-[2px]">FOUR</span>
          <ParkingIcon className="size-[59px] text-[#facc15]" />
          <span className="ml-[3px] pt-0.5 tracking-[3.200px]">ARKS</span>
        </div>
        <nav className="flex h-[75px] items-stretch gap-[12.500px] text-[21.500px] text-black">
          <a className="flex w-[236px] items-center justify-center border border-[#18181b] bg-[#fde047] font-medium tracking-[2.150px]">PARQUEADEROS</a>
          <span className="w-px bg-[#18181b]" />
          <a className="flex w-[181px] items-center border border-[#18181b] pl-4 tracking-[2px]">
            PERFIL
            <span className="ml-[19px] h-[54px] w-[3px] bg-[#18181b]" />
            <User className="ml-[13px] size-[37px]" strokeWidth={2} />
          </a>
          <span className="w-px bg-[#18181b]" />
          <a className="flex w-[75px] items-center justify-center border border-[#18181b]">
            <Sun className="size-[42px]" strokeWidth={2.100} />
          </a>
        </nav>
      </header>
      <div className="flex h-[89px] items-center border-b border-[#e4e4e7] pl-4">
        <ParkingIcon className="size-[46px] text-black" />
        <h1 className="ml-[10px] w-[309px] border-r border-[#18181b] text-[38px] leading-[62px] font-[350] text-black">PARQUEADEROS</h1>
        <div className="ml-[19px] flex gap-[12.500px] text-[21.500px] leading-[60px]">
          <input className={`${field} tracking-[-0.8px] placeholder:text-[#7b7b83]`} placeholder="Filtrar por nombre" />
          <input className={`${field} tracking-[-0.8px] placeholder:text-[#7b7b83]`} placeholder="Filtrar por dirección" />
          {['Ciudad', 'Tipo'].map((label) => (
            <button key={label} className={`${field} flex items-center justify-between tracking-[-0.3px] text-[#18181b]`}>
              {label}
              <ChevronDown className="size-6 text-[#888]" strokeWidth={2} />
            </button>
          ))}
        </div>
      </div>
      <main className="flex">
        <section className="h-[1100px] w-[1194px] overflow-hidden pr-[43px] pl-6">
          <p className="mx-auto w-[1000px] translate-x-[9px] pt-8 text-center text-[24px] leading-[37px] tracking-[-0.320px]">
            Encuentra tu parqueadero ideal. En la barra superior podrás filtrar los parqueaderos de <span className="font-medium tracking-[-0.3px]">FourParksColombia</span>.
          </p>
          <div className="mt-[25px] grid grid-cols-3 gap-[12.500px]">
            {LOTS.map((lot) => <LotCard key={lot.name} lot={lot} />)}
          </div>
        </section>
        <MapPane />
      </main>
    </div>
  );
}
